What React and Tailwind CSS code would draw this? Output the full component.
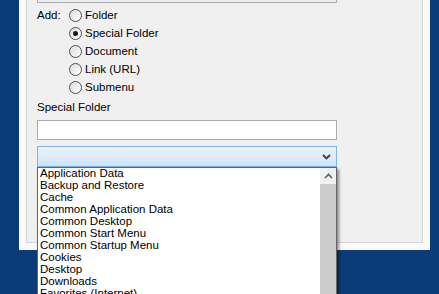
import React from "react";

const folders = [
  "Application Data",
  "Backup and Restore",
  "Cache",
  "Common Application Data",
  "Common Desktop",
  "Common Start Menu",
  "Common Startup Menu",
  "Cookies",
  "Desktop",
  "Downloads",
  "Favorites (Internet)",
  "Fonts",
];

const options = ["Folder", "Special Folder", "Document", "Link (URL)", "Submenu"];

function Radio({ checked }) {
  return (
    <span className="flex h-[13px] w-[13px] items-center justify-center rounded-full border border-[#4d4d4d] bg-gradient-to-br from-[#dcdcdc] to-white">
      {checked && <span className="h-[5px] w-[5px] rounded-full bg-[#1a1a1a]" />}
    </span>
  );
}

export default function App() {
  return (
    <div
      className="h-[294px] w-[439px] overflow-hidden bg-[#0c3c78] pl-[19px] text-[11.5px] text-black"
      style={{ fontFamily: '"Liberation Sans", Arial, sans-serif' }}
    >
      <div className="h-[250px] w-[411px] bg-[#fafafa] px-[7px]">
        <div className="h-[243px] border-x border-b border-[#d6d3d3] bg-[#f0f0f0] pl-[10px]">
          {/* bottom of the box above */}
          <div className="h-[3px] w-[300px] border-x border-b border-[#acacac] bg-[#ededed]" />

          <div className="mt-[3px] flex">
            <div className="w-[32px] pt-[2px] leading-[14px]">Add:</div>
            <div className="flex flex-col">
              {options.map((o, i) => (
                <label key={o} className="flex h-[18px] items-center">
                  <Radio checked={i === 1} />
                  <span className="ml-[3px] leading-[14px]">{o}</span>
                </label>
              ))}
            </div>
          </div>

          <div className="mt-[4px] h-[14px] leading-[14px]">Special Folder</div>

          <div className="mt-[6px] h-[20px] w-[300px] border border-[#acacac] bg-white" />

          <div className="relative mt-[6px] w-[300px]">
            <div className="flex h-[21px] items-center justify-end border border-[#7eb4ea] bg-gradient-to-b from-[#ecf4fc] to-[#cde3f8] pr-[5px]">
              <svg width="9" height="6" viewBox="0 0 9 6">
                <path d="M1 1 L4.5 4.5 L8 1" fill="none" stroke="#3c3c50" strokeWidth="1.8" />
              </svg>
            </div>

            {/* dropdown list */}
            <div className="absolute left-0 top-full z-10 flex h-[140px] w-[300px] border border-[#646464] bg-white shadow-[2px_2px_3px_rgba(0,0,0,0.45)]">
              <div className="-mt-px flex-1 pl-[2px]">
                {folders.map((f) => (
                  <div key={f} className="h-[12px] whitespace-nowrap leading-[12px]">
                    {f}
                  </div>
                ))}
              </div>
              <div className="flex w-[16px] flex-col bg-[#f0f0f0]">
                <div className="flex h-[16px] items-center justify-center">
                  <svg width="9" height="6" viewBox="0 0 9 6">
                    <path d="M1 5 L4.5 1.5 L8 5" fill="none" stroke="#606060" strokeWidth="1.6" />
                  </svg>
                </div>
                <div className="flex-1 bg-[#cdcdcd]" />
              </div>
            </div>
          </div>
        </div>
      </div>
    </div>
  );
}
